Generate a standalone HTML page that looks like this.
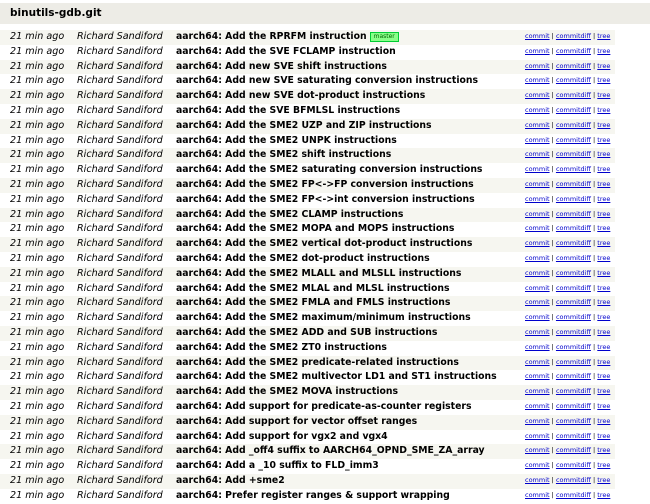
<!DOCTYPE html>
<html><head><style>
body{margin:0;width:650px;height:500px;overflow:hidden;background:#fff;font-family:"DejaVu Sans","Liberation Sans",sans-serif;}
.hdr{position:absolute;left:0;top:3px;width:650px;height:21px;background:#edece6;font-weight:bold;font-size:10.5px;line-height:21px;padding-left:10px;box-sizing:border-box;color:#000;}
.rows{position:absolute;left:0;top:30px;width:615px;}
.r{height:14.8px;line-height:14.8px;font-size:9.6px;position:relative;white-space:nowrap;}
.r:nth-child(odd){background:#f6f6f0;}
.r span{position:absolute;top:0;}
.d{left:10px;font-style:italic;color:#000;}
.a{left:77px;font-style:italic;color:#000;}
.s{left:176px;font-weight:bold;color:#000;font-size:9.3px;}
.l{left:525px;font-size:6.5px;color:#0000cc;top:-1px!important;}
.l u{text-decoration:underline;}
.l i{font-style:normal;color:#000;}
.b{display:inline-block;font-weight:normal;font-size:6px;background:#88ff88;border:1px solid #00cc33;color:#006600;padding:0 3px;line-height:8px;margin-left:3px;vertical-align:1px;}
</style></head><body>
<div class="hdr">binutils-gdb.git</div>
<div class="rows">
<div class="r"><span class="d">21 min ago</span><span class="a">Richard Sandiford</span><span class="s">aarch64: Add the RPRFM instruction<b class="b">master</b></span><span class="l"><u>commit</u> <i>|</i> <u>commitdiff</u> <i>|</i> <u>tree</u></span></div>
<div class="r"><span class="d">21 min ago</span><span class="a">Richard Sandiford</span><span class="s">aarch64: Add the SVE FCLAMP instruction</span><span class="l"><u>commit</u> <i>|</i> <u>commitdiff</u> <i>|</i> <u>tree</u></span></div>
<div class="r"><span class="d">21 min ago</span><span class="a">Richard Sandiford</span><span class="s">aarch64: Add new SVE shift instructions</span><span class="l"><u>commit</u> <i>|</i> <u>commitdiff</u> <i>|</i> <u>tree</u></span></div>
<div class="r"><span class="d">21 min ago</span><span class="a">Richard Sandiford</span><span class="s">aarch64: Add new SVE saturating conversion instructions</span><span class="l"><u>commit</u> <i>|</i> <u>commitdiff</u> <i>|</i> <u>tree</u></span></div>
<div class="r"><span class="d">21 min ago</span><span class="a">Richard Sandiford</span><span class="s">aarch64: Add new SVE dot-product instructions</span><span class="l"><u>commit</u> <i>|</i> <u>commitdiff</u> <i>|</i> <u>tree</u></span></div>
<div class="r"><span class="d">21 min ago</span><span class="a">Richard Sandiford</span><span class="s">aarch64: Add the SVE BFMLSL instructions</span><span class="l"><u>commit</u> <i>|</i> <u>commitdiff</u> <i>|</i> <u>tree</u></span></div>
<div class="r"><span class="d">21 min ago</span><span class="a">Richard Sandiford</span><span class="s">aarch64: Add the SME2 UZP and ZIP instructions</span><span class="l"><u>commit</u> <i>|</i> <u>commitdiff</u> <i>|</i> <u>tree</u></span></div>
<div class="r"><span class="d">21 min ago</span><span class="a">Richard Sandiford</span><span class="s">aarch64: Add the SME2 UNPK instructions</span><span class="l"><u>commit</u> <i>|</i> <u>commitdiff</u> <i>|</i> <u>tree</u></span></div>
<div class="r"><span class="d">21 min ago</span><span class="a">Richard Sandiford</span><span class="s">aarch64: Add the SME2 shift instructions</span><span class="l"><u>commit</u> <i>|</i> <u>commitdiff</u> <i>|</i> <u>tree</u></span></div>
<div class="r"><span class="d">21 min ago</span><span class="a">Richard Sandiford</span><span class="s">aarch64: Add the SME2 saturating conversion instructions</span><span class="l"><u>commit</u> <i>|</i> <u>commitdiff</u> <i>|</i> <u>tree</u></span></div>
<div class="r"><span class="d">21 min ago</span><span class="a">Richard Sandiford</span><span class="s">aarch64: Add the SME2 FP&lt;-&gt;FP conversion instructions</span><span class="l"><u>commit</u> <i>|</i> <u>commitdiff</u> <i>|</i> <u>tree</u></span></div>
<div class="r"><span class="d">21 min ago</span><span class="a">Richard Sandiford</span><span class="s">aarch64: Add the SME2 FP&lt;-&gt;int conversion instructions</span><span class="l"><u>commit</u> <i>|</i> <u>commitdiff</u> <i>|</i> <u>tree</u></span></div>
<div class="r"><span class="d">21 min ago</span><span class="a">Richard Sandiford</span><span class="s">aarch64: Add the SME2 CLAMP instructions</span><span class="l"><u>commit</u> <i>|</i> <u>commitdiff</u> <i>|</i> <u>tree</u></span></div>
<div class="r"><span class="d">21 min ago</span><span class="a">Richard Sandiford</span><span class="s">aarch64: Add the SME2 MOPA and MOPS instructions</span><span class="l"><u>commit</u> <i>|</i> <u>commitdiff</u> <i>|</i> <u>tree</u></span></div>
<div class="r"><span class="d">21 min ago</span><span class="a">Richard Sandiford</span><span class="s">aarch64: Add the SME2 vertical dot-product instructions</span><span class="l"><u>commit</u> <i>|</i> <u>commitdiff</u> <i>|</i> <u>tree</u></span></div>
<div class="r"><span class="d">21 min ago</span><span class="a">Richard Sandiford</span><span class="s">aarch64: Add the SME2 dot-product instructions</span><span class="l"><u>commit</u> <i>|</i> <u>commitdiff</u> <i>|</i> <u>tree</u></span></div>
<div class="r"><span class="d">21 min ago</span><span class="a">Richard Sandiford</span><span class="s">aarch64: Add the SME2 MLALL and MLSLL instructions</span><span class="l"><u>commit</u> <i>|</i> <u>commitdiff</u> <i>|</i> <u>tree</u></span></div>
<div class="r"><span class="d">21 min ago</span><span class="a">Richard Sandiford</span><span class="s">aarch64: Add the SME2 MLAL and MLSL instructions</span><span class="l"><u>commit</u> <i>|</i> <u>commitdiff</u> <i>|</i> <u>tree</u></span></div>
<div class="r"><span class="d">21 min ago</span><span class="a">Richard Sandiford</span><span class="s">aarch64: Add the SME2 FMLA and FMLS instructions</span><span class="l"><u>commit</u> <i>|</i> <u>commitdiff</u> <i>|</i> <u>tree</u></span></div>
<div class="r"><span class="d">21 min ago</span><span class="a">Richard Sandiford</span><span class="s">aarch64: Add the SME2 maximum/minimum instructions</span><span class="l"><u>commit</u> <i>|</i> <u>commitdiff</u> <i>|</i> <u>tree</u></span></div>
<div class="r"><span class="d">21 min ago</span><span class="a">Richard Sandiford</span><span class="s">aarch64: Add the SME2 ADD and SUB instructions</span><span class="l"><u>commit</u> <i>|</i> <u>commitdiff</u> <i>|</i> <u>tree</u></span></div>
<div class="r"><span class="d">21 min ago</span><span class="a">Richard Sandiford</span><span class="s">aarch64: Add the SME2 ZT0 instructions</span><span class="l"><u>commit</u> <i>|</i> <u>commitdiff</u> <i>|</i> <u>tree</u></span></div>
<div class="r"><span class="d">21 min ago</span><span class="a">Richard Sandiford</span><span class="s">aarch64: Add the SME2 predicate-related instructions</span><span class="l"><u>commit</u> <i>|</i> <u>commitdiff</u> <i>|</i> <u>tree</u></span></div>
<div class="r"><span class="d">21 min ago</span><span class="a">Richard Sandiford</span><span class="s">aarch64: Add the SME2 multivector LD1 and ST1 instructions</span><span class="l"><u>commit</u> <i>|</i> <u>commitdiff</u> <i>|</i> <u>tree</u></span></div>
<div class="r"><span class="d">21 min ago</span><span class="a">Richard Sandiford</span><span class="s">aarch64: Add the SME2 MOVA instructions</span><span class="l"><u>commit</u> <i>|</i> <u>commitdiff</u> <i>|</i> <u>tree</u></span></div>
<div class="r"><span class="d">21 min ago</span><span class="a">Richard Sandiford</span><span class="s">aarch64: Add support for predicate-as-counter registers</span><span class="l"><u>commit</u> <i>|</i> <u>commitdiff</u> <i>|</i> <u>tree</u></span></div>
<div class="r"><span class="d">21 min ago</span><span class="a">Richard Sandiford</span><span class="s">aarch64: Add support for vector offset ranges</span><span class="l"><u>commit</u> <i>|</i> <u>commitdiff</u> <i>|</i> <u>tree</u></span></div>
<div class="r"><span class="d">21 min ago</span><span class="a">Richard Sandiford</span><span class="s">aarch64: Add support for vgx2 and vgx4</span><span class="l"><u>commit</u> <i>|</i> <u>commitdiff</u> <i>|</i> <u>tree</u></span></div>
<div class="r"><span class="d">21 min ago</span><span class="a">Richard Sandiford</span><span class="s">aarch64: Add _off4 suffix to AARCH64_OPND_SME_ZA_array</span><span class="l"><u>commit</u> <i>|</i> <u>commitdiff</u> <i>|</i> <u>tree</u></span></div>
<div class="r"><span class="d">21 min ago</span><span class="a">Richard Sandiford</span><span class="s">aarch64: Add a _10 suffix to FLD_imm3</span><span class="l"><u>commit</u> <i>|</i> <u>commitdiff</u> <i>|</i> <u>tree</u></span></div>
<div class="r"><span class="d">21 min ago</span><span class="a">Richard Sandiford</span><span class="s">aarch64: Add +sme2</span><span class="l"><u>commit</u> <i>|</i> <u>commitdiff</u> <i>|</i> <u>tree</u></span></div>
<div class="r"><span class="d">21 min ago</span><span class="a">Richard Sandiford</span><span class="s">aarch64: Prefer register ranges &amp; support wrapping</span><span class="l"><u>commit</u> <i>|</i> <u>commitdiff</u> <i>|</i> <u>tree</u></span></div>
</div>
</body></html>
